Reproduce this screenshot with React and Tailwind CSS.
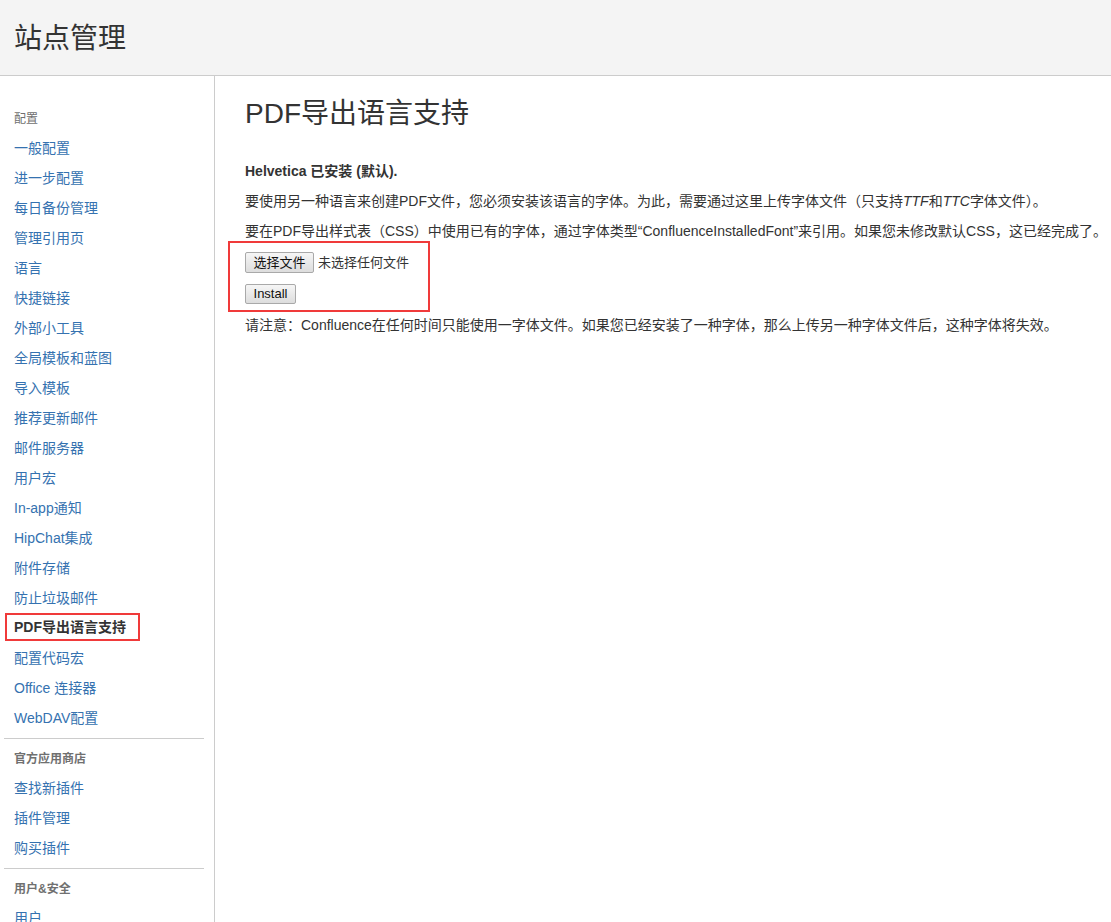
import React from "react";

const font = { fontFamily: '"Liberation Sans", Arial, "Noto Sans CJK SC", sans-serif' };

const section1 = [
  "一般配置", "进一步配置", "每日备份管理", "管理引用页", "语言", "快捷链接", "外部小工具",
  "全局模板和蓝图", "导入模板", "推荐更新邮件", "邮件服务器", "用户宏", "In-app通知",
  "HipChat集成", "附件存储", "防止垃圾邮件", "PDF导出语言支持", "配置代码宏", "Office 连接器", "WebDAV配置",
];
const section2 = ["查找新插件", "插件管理", "购买插件"];

function Link({ children }) {
  return (
    <div className="h-[30px] flex items-center pl-[14px] text-[14px] text-[#3572b0]">{children}</div>
  );
}

function Heading({ children, bold }) {
  return (
    <div className={`h-[30px] flex items-center pl-[14px] pt-[1px] text-[12px] text-[#707070] ${bold ? "font-bold" : ""}`}>
      {children}
    </div>
  );
}

function Sep() {
  return <div className="ml-[4px] mr-[10px] mt-[5px] mb-[4px] h-px bg-[#cccccc]" />;
}

export default function App() {
  return (
    <div className="h-[922px] w-[1111px] overflow-hidden bg-white text-[#333333]" style={font}>
      <header className="h-[76px] bg-[#f4f4f4] border-b border-[#cccccc] flex items-center pl-[14px] pt-[3px]">
        <h1 className="text-[28px] leading-[32px] font-normal text-[#333333]">站点管理</h1>
      </header>
      <div className="flex">
        <nav className="w-[215px] shrink-0 border-r border-[#cccccc] pt-[27px] h-[900px]">
          <Heading>配置</Heading>
          {section1.map((t) =>
            t === "PDF导出语言支持" ? (
              <div key={t} className="h-[30px] flex items-start">
                <div className="ml-[5px] h-[28px] w-[135px] border-2 border-[#f03a3a] flex items-center pl-[7px] text-[14px] font-bold text-[#333333]">
                  {t}
                </div>
              </div>
            ) : (
              <Link key={t}>{t}</Link>
            )
          )}
          <Sep />
          <Heading bold>官方应用商店</Heading>
          {section2.map((t) => (
            <Link key={t}>{t}</Link>
          ))}
          <Sep />
          <Heading bold>用户&amp;安全</Heading>
          <Link>用户</Link>
        </nav>
        <main className="flex-1 pl-[30px]">
          <h2 className="mt-[22px] text-[28px] leading-[32px] font-normal text-[#333333]">PDF导出语言支持</h2>
          <p className="mt-[31px] text-[14px] leading-[20px] font-bold">Helvetica 已安装 (默认).</p>
          <p className="mt-[10px] text-[14px] leading-[20px]">
            要使用另一种语言来创建PDF文件，您必须安装该语言的字体。为此，需要通过这里上传字体文件（只支持<i>TTF</i>和<i>TTC</i>字体文件）。
          </p>
          <p className="mt-[10px] text-[14px] leading-[20px] whitespace-nowrap">
            要在PDF导出样式表（CSS）中使用已有的字体，通过字体类型“ConfluenceInstalledFont”来引用。如果您未修改默认CSS，这已经完成了。
          </p>
          <div className="relative mt-[11px]">
            <div className="absolute -top-[11px] -left-[17px] w-[202px] h-[71px] border-2 border-[#f03a3a] pointer-events-none" />
            <div className="flex items-center h-[21px]">
              <button className="h-[21px] w-[69px] border border-[#a9a9a9] rounded-[2px] bg-gradient-to-b from-[#f6f6f6] to-[#dddddd] text-[13px] leading-[19px] text-[#111111]">
                选择文件
              </button>
              <span className="ml-[4px] text-[13px] text-[#333333]">未选择任何文件</span>
            </div>
            <div className="mt-[11px] h-[20px] flex items-center">
              <button className="h-[20px] w-[51px] border border-[#a9a9a9] rounded-[2px] bg-gradient-to-b from-[#f6f6f6] to-[#dddddd] text-[13px] leading-[18px] text-[#111111]">
                Install
              </button>
            </div>
          </div>
          <p className="mt-[11px] text-[14px] leading-[20px]">
            请注意：Confluence在任何时间只能使用一字体文件。如果您已经安装了一种字体，那么上传另一种字体文件后，这种字体将失效。
          </p>
        </main>
      </div>
    </div>
  );
}
